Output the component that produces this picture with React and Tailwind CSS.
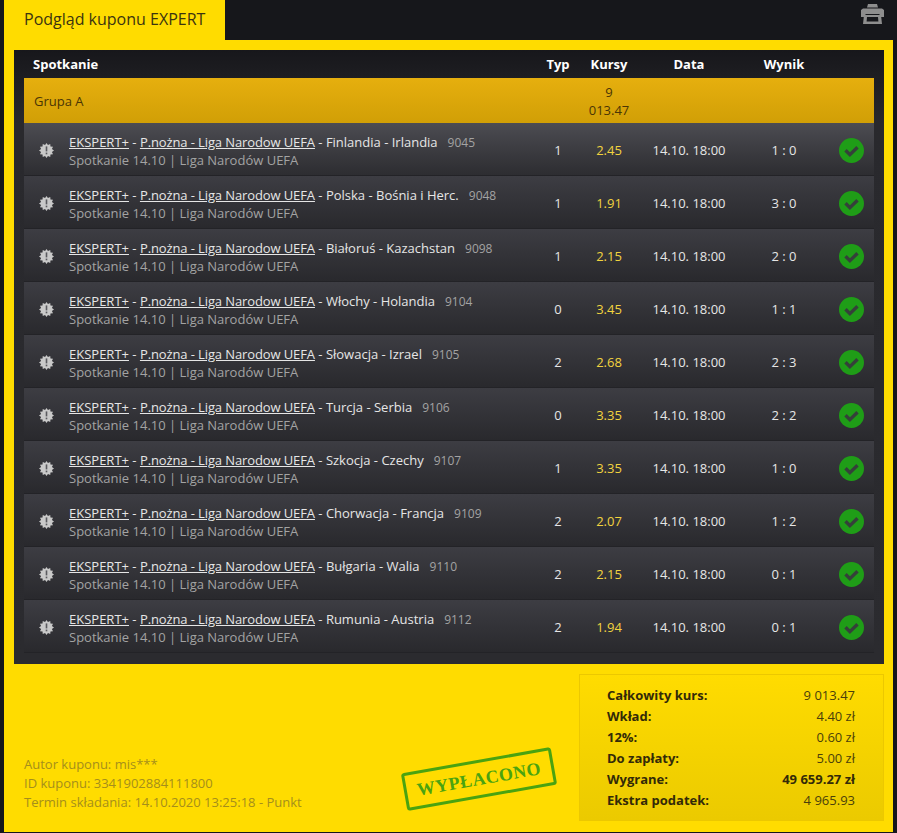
const matches = [
  { name: 'Finlandia - Irlandia', id: '9045', typ: '1', odds: '2.45', score: '1 : 0' },
  { name: 'Polska - Bośnia i Herc.', id: '9048', typ: '1', odds: '1.91', score: '3 : 0' },
  { name: 'Białoruś - Kazachstan', id: '9098', typ: '1', odds: '2.15', score: '2 : 0' },
  { name: 'Włochy - Holandia', id: '9104', typ: '0', odds: '3.45', score: '1 : 1' },
  { name: 'Słowacja - Izrael', id: '9105', typ: '2', odds: '2.68', score: '2 : 3' },
  { name: 'Turcja - Serbia', id: '9106', typ: '0', odds: '3.35', score: '2 : 2' },
  { name: 'Szkocja - Czechy', id: '9107', typ: '1', odds: '3.35', score: '1 : 0' },
  { name: 'Chorwacja - Francja', id: '9109', typ: '2', odds: '2.07', score: '1 : 2' },
  { name: 'Bułgaria - Walia', id: '9110', typ: '2', odds: '2.15', score: '0 : 1' },
  { name: 'Rumunia - Austria', id: '9112', typ: '2', odds: '1.94', score: '0 : 1' },
];

const summary = [
  ['Całkowity kurs:', '9 013.47'],
  ['Wkład:', '4.40 zł'],
  ['12%:', '0.60 zł'],
  ['Do zapłaty:', '5.00 zł'],
  ['Wygrane:', '49 659.27 zł', true],
  ['Ekstra podatek:', '4 965.93'],
];

const columns = 'grid grid-cols-[514px_40px_62px_98px_92px_44px] items-center';

// 12 pointed burst behind the exclamation mark
const burstPoints = Array.from({ length: 24 }, (_, i) => {
  const r = i % 2 ? 5.6 : 7.5;
  const a = (i * Math.PI) / 12;
  return `${(7.5 + r * Math.sin(a)).toFixed(2)},${(7.5 - r * Math.cos(a)).toFixed(2)}`;
}).join(' ');

const AlertBurst = () => (
  <svg width="15" height="15" viewBox="0 0 15 15" className="ml-[15px] -mt-[2px]">
    <polygon fill="#c9c9c9" points={burstPoints} />
    <rect x="6.7" y="3.4" width="1.6" height="5" fill="#5a5a5f" />
    <rect x="6.7" y="9.6" width="1.6" height="1.7" fill="#5a5a5f" />
  </svg>
);

const CheckBadge = () => (
  <svg width="25" height="25" viewBox="0 0 25 25" className="ml-[9px] -mt-[2px]">
    <circle cx="12.5" cy="12.5" r="12.5" fill="#1f9d17" />
    <path d="M6.5 12.3l4.4 4.4 7.6-7.4" fill="none" stroke="#35403a" strokeWidth="3.4" />
  </svg>
);

const PrinterIcon = () => (
  <svg width="23" height="20" viewBox="0 0 23 20" fill="#8e8e8e">
    <path d="M7 0h9l1 3.5H6z" />
    <path d="M2 4.5h19l2 1.5v7h-4l-.6-3H4.6L4 13H0V6z" />
    <path d="M3 11h17l1 9H2zM6 13l-.4 4.5h11.8L17 13z" fillRule="evenodd" />
  </svg>
);

const MatchRow = ({ match, first }) => (
  <div
    className={`${columns} h-[53px] bg-gradient-to-b ${first ? 'from-[#4c4c52] to-[#2d2d31]' : 'from-[#3d3d43] to-[#29292d]'} border-b border-[#232327] pt-1 text-[13px] text-[#e6e6e6]`}
  >
    <div className="flex items-center">
      <AlertBurst />
      <div className="ml-[15px] -mt-[1px] leading-[18px]">
        <div className="whitespace-nowrap">
          <span className="underline">EKSPERT+</span> - <span className="underline tracking-[-0.11px]">P.nożna - Liga Narodow UEFA</span> - {match.name}
          <span className="ml-[10px] text-[12px] text-[#a3a3a3]">{match.id}</span>
        </div>
        <div className="leading-[17px] text-[#a3a3a3]">Spotkanie 14.10 | Liga Narodów UEFA</div>
      </div>
    </div>
    <div className="text-center">{match.typ}</div>
    <div className="text-center text-[#f2d33f]">{match.odds}</div>
    <div className="text-center">14.10. 18:00</div>
    <div className="text-center">{match.score}</div>
    <CheckBadge />
  </div>
);

export default function App() {
  return (
    <div className="w-[897px] h-[833px] bg-[#16171b] pl-1 font-['Open_Sans',sans-serif] overflow-hidden">
      <div className="flex h-10 w-[889px] justify-between pr-[9px]">
        <div className="w-[221px] bg-[#ffdc00] pl-5 pt-[7px] text-[16px] leading-6 text-[#3c3410]">Podgląd kuponu EXPERT</div>
        <div className="pt-1"><PrinterIcon /></div>
      </div>
      <div className="w-[889px] h-[792px] bg-[#ffdc00] pl-[10px] pr-[9px] pt-[10px]">
        <div className="h-[614px] bg-gradient-to-b from-[#17171b] via-[#29292d] via-[12%] to-[#2b2b2f] px-[10px]">
          <div className={`${columns} h-[28px] pt-px text-[13px] font-bold text-white`}>
            <div className="pl-[9px]">Spotkanie</div>
            <div className="text-center">Typ</div>
            <div className="text-center">Kursy</div>
            <div className="text-center">Data</div>
            <div className="text-center">Wynik</div>
          </div>
          <div className={`${columns} h-[45px] bg-gradient-to-b from-[#e6af0e] to-[#d19f06] text-[13px] leading-[18px] text-[#4a3505]`}>
            <div className="pl-[10px]">Grupa A</div>
            <div />
            <div className="text-center">9<br />013.47</div>
          </div>
          {matches.map((m, i) => <MatchRow key={m.id} match={m} first={i === 0} />)}
        </div>
        <div className="flex h-[168px] justify-between">
          <div className="flex w-[541px] items-end justify-between pb-[20px] pl-[10px]">
            <div className="text-[13px] leading-[19px] text-[#a58e1c]">
              <div>Autor kuponu: mis***</div>
              <div>ID kuponu: 3341902884111800</div>
              <div>Termin składania: 14.10.2020 13:25:18 - Punkt</div>
            </div>
            <div className="mb-[14px] flex h-[38px] w-[152px] -rotate-[10deg] items-center justify-center rounded-[3px] border-[3px] border-[#4aa310] font-['Liberation_Serif',serif] text-[18px] font-bold leading-none tracking-[0.5px] text-[#4aa310]">WYPŁACONO</div>
          </div>
          <div className="mt-[10px] h-[147px] w-[305px] border border-[#ecc800] bg-gradient-to-b from-[#ffdc00] to-[#ebca00] pl-[27px] pr-[28px] pt-[10px] text-[13px] leading-[21px] text-[#4a3f0a]">
            {summary.map(([label, value, strong]) => (
              <div key={label} className="flex justify-between">
                <span className="font-bold text-[#332a08]">{label}</span>
                <span className={strong ? 'font-bold text-[#332a08]' : ''}>{value}</span>
              </div>
            ))}
          </div>
        </div>
      </div>
    </div>
  );
}
